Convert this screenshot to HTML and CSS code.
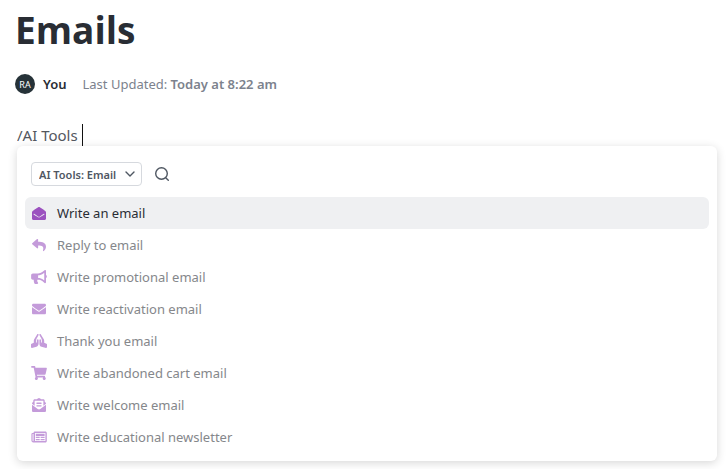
FILE: index.html
```html
<!DOCTYPE html>
<html lang="en">
  <head>
    <meta charset="UTF-8">
    <title>Emails</title>
    <link rel="stylesheet" href="styles.css">
  </head>
  <body>
    <main class="doc">
      <header class="doc-head">
        <h1 class="doc-title">Emails</h1>
        <div class="doc-meta">
          <span class="avatar">RA</span>
          <strong class="author">You</strong>
          <span class="updated">Last Updated: <strong>Today at 8:22 am</strong></span>
        </div>
      </header>

      <div class="editor">
        <input class="editor-input" type="text" value="/AI Tools" aria-label="Document text">
        <span class="caret"></span>
      </div>

      <div class="menu">
        <div class="menu-bar">
          <div class="picker">
            <select class="picker-select" aria-label="AI tools category">
              <option>AI Tools: Email</option>
            </select>
            <svg class="picker-arrow" viewBox="0 0 12 12"><path d="M2 4l4 4 4-4"/></svg>
          </div>
          <button class="search" type="button" aria-label="Search">
            <svg viewBox="0 0 16 16"><circle cx="7.5" cy="7.5" r="5.8"/><path d="M11.7 11.7l2.6 2.6"/></svg>
          </button>
        </div>

        <ul class="menu-list">
          <li>
            <button class="item active" type="button">
              <svg viewBox="0 0 512 512" preserveAspectRatio="none"><path d="M512 464c0 26.51-21.49 48-48 48H48c-26.51 0-48-21.49-48-48V200.724a48 48 0 0 1 18.387-37.776c24.913-19.529 45.501-35.365 164.2-121.511C199.412 29.17 232.797-.347 256 .003c23.198-.354 56.596 29.172 73.413 41.433 118.687 86.137 139.303 101.995 164.2 121.512A48 48 0 0 1 512 200.724V464zm-65.666-196.605c-2.563-3.728-7.7-4.595-11.339-1.907-22.845 16.873-55.462 40.705-105.582 77.079-16.825 12.266-50.21 41.781-73.413 41.43-23.211.344-56.559-29.143-73.413-41.43-50.114-36.37-82.734-60.204-105.582-77.079-3.639-2.688-8.776-1.821-11.339 1.907l-9.072 13.196a7.998 7.998 0 0 0 1.839 10.967c22.887 16.899 55.454 40.69 105.303 76.868 20.274 14.781 56.524 47.813 92.264 47.573 35.724.242 71.961-32.771 92.263-47.573 49.85-36.179 82.418-59.97 105.303-76.868a7.998 7.998 0 0 0 1.839-10.967l-9.071-13.196z"/></svg>
              Write an email
            </button>
          </li>
          <li>
            <button class="item" type="button">
              <svg viewBox="0 0 512 512"><path d="M8.309 189.836L184.313 37.851C199.719 24.546 224 35.347 224 56.015v80.053c160.629 1.839 288 34.032 288 186.258 0 61.441-39.581 122.309-83.333 154.132-13.653 9.931-33.111-2.533-28.077-18.631 45.344-145.012-21.507-183.51-176.59-185.742V360c0 20.7-24.3 31.453-39.687 18.164l-176.004-152c-11.071-9.562-11.086-26.753 0-36.328z"/></svg>
              Reply to email
            </button>
          </li>
          <li>
            <button class="item" type="button">
              <svg viewBox="0 0 576 512"><path d="M576 240c0-23.63-12.95-44.04-32-55.12V32.01C544 23.26 537.02 0 512 0c-7.12 0-14.19 2.38-19.98 7.02l-85.03 68.03C364.28 109.19 310.66 128 256 128H64c-35.35 0-64 28.65-64 64v96c0 35.35 28.65 64 64 64h33.7c-1.39 10.48-2.18 21.14-2.18 32 0 39.77 9.26 77.35 25.56 110.94 5.19 10.69 16.52 17.06 28.4 17.06h74.28c26.05 0 41.69-29.84 25.9-50.56-16.4-21.52-26.15-48.36-26.15-77.44 0-11.11 1.62-21.79 4.41-32H256c54.66 0 108.28 18.81 150.98 52.95l85.03 68.03a32.023 32.023 0 0 0 19.98 7.02c24.92 0 32-22.78 32-32V295.13C563.05 284.04 576 263.63 576 240zm-96 141.42l-33.05-26.44C392.95 311.78 325.12 288 256 288v-96c69.12 0 136.95-23.78 190.95-66.98L480 98.58v282.84z"/></svg>
              Write promotional email
            </button>
          </li>
          <li>
            <button class="item" type="button">
              <svg viewBox="0 0 512 512"><path d="M502.3 190.8c3.9-3.1 9.7-.2 9.7 4.7V400c0 26.5-21.5 48-48 48H48c-26.5 0-48-21.5-48-48V195.6c0-5 5.7-7.8 9.7-4.7 22.4 17.4 52.1 39.5 154.1 113.6 21.1 15.4 56.7 47.8 92.2 47.6 35.7.3 72-32.8 92.3-47.6 102-74.1 131.6-96.3 154-113.7zM256 320c23.2.4 56.6-29.2 73.4-41.4 132.7-96.3 142.8-104.7 173.4-128.7 5.8-4.5 9.2-11.5 9.2-18.9v-19c0-26.5-21.5-48-48-48H48c-26.5 0-48 21.5-48 48v19c0 7.4 3.4 14.3 9.2 18.9 30.6 23.9 40.7 32.4 173.4 128.7 16.8 12.2 50.2 41.8 73.4 41.4z"/></svg>
              Write reactivation email
            </button>
          </li>
          <li>
            <button class="item" type="button">
              <svg viewBox="0 0 640 512" preserveAspectRatio="none"><path d="M272 191.91c-17.6 0-32 14.4-32 32v80c0 8.84-7.16 16-16 16s-16-7.16-16-16v-76.55c0-17.39 4.72-34.47 13.69-49.39l77.75-129.59c9.09-15.16 4.19-34.81-10.97-43.91-14.45-8.67-32.72-4.3-42.3 9.21-.2.23-.62.21-.79.48l-117.26 175.9C117.56 205.9 112 224.31 112 243.29v80.23l-90.12 30.04A31.974 31.974 0 0 0 0 383.91v96c0 10.82 8.52 32 32 32 2.69 0 5.41-.34 8.06-1.03l179.19-46.62C269.16 449.99 304 403.8 304 351.91v-128c0-17.6-14.4-32-32-32zm346.12 161.73L528 323.6v-80.23c0-18.98-5.56-37.39-16.12-53.23L394.62 14.25c-.18-.27-.59-.24-.79-.48-9.58-13.51-27.85-17.88-42.3-9.21-15.16 9.09-20.06 28.75-10.97 43.91l77.75 129.59c8.97 14.92 13.69 32 13.69 49.39V304c0 8.84-7.16 16-16 16s-16-7.16-16-16v-80c0-17.6-14.4-32-32-32s-32 14.4-32 32v128c0 51.89 34.84 98.08 84.75 112.34l179.19 46.62c2.66.69 5.38 1.03 8.06 1.03 23.48 0 32-21.18 32-32v-96c0-13.77-8.81-25.99-21.88-30.35z"/></svg>
              Thank you email
            </button>
          </li>
          <li>
            <button class="item" type="button">
              <svg viewBox="0 0 576 512"><path d="M528.12 301.319l47.273-208C578.806 78.301 567.391 64 551.99 64H159.208l-9.166-44.81C147.758 8.021 137.93 0 126.529 0H24C10.745 0 0 10.745 0 24v16c0 13.255 10.745 24 24 24h69.883l70.248 343.435C147.325 417.1 136 435.222 136 456c0 30.928 25.072 56 56 56s56-25.072 56-56c0-15.674-6.447-29.835-16.824-40h209.647C430.447 426.165 424 440.326 424 456c0 30.928 25.072 56 56 56s56-25.072 56-56c0-22.172-12.888-41.332-31.579-50.405l5.517-24.276c3.413-15.018-8.002-29.319-23.403-29.319H218.117l-6.545-32h293.145c11.206 0 20.92-7.754 23.403-18.681z"/></svg>
              Write abandoned cart email
            </button>
          </li>
          <li>
            <button class="item" type="button">
              <svg viewBox="0 0 512 512"><path d="M176 216h160c8.84 0 16-7.16 16-16v-16c0-8.84-7.16-16-16-16H176c-8.84 0-16 7.16-16 16v16c0 8.84 7.16 16 16 16zm-16 80c0 8.84 7.16 16 16 16h160c8.84 0 16-7.16 16-16v-16c0-8.84-7.16-16-16-16H176c-8.84 0-16 7.16-16 16v16zm96 121.13c-16.42 0-32.84-5.06-46.86-15.19L0 250.86V464c0 26.51 21.49 48 48 48h416c26.51 0 48-21.49 48-48V250.86L302.86 401.94c-14.02 10.12-30.44 15.19-46.86 15.19zm237.61-254.18c-8.85-6.94-17.24-13.47-29.61-22.81V96c0-26.51-21.49-48-48-48h-77.55c-3.04-2.2-5.87-4.26-9.04-6.56C312.6 29.17 279.2-.35 256 0c-23.2-.35-56.59 29.17-73.41 41.44-3.17 2.3-6 4.36-9.04 6.56H96c-26.51 0-48 21.49-48 48v44.14c-12.37 9.33-20.76 15.87-29.61 22.81A47.995 47.995 0 0 0 0 200.72v10.65l96 69.35V96h320v184.72l96-69.35v-10.65c0-14.74-6.78-28.67-18.39-37.77z"/></svg>
              Write welcome email
            </button>
          </li>
          <li>
            <button class="item" type="button">
              <svg viewBox="0 0 16 14"><path fill-rule="evenodd" d="M4 1.6h10.3c.9 0 1.5.6 1.5 1.5v7.8c0 .9-.6 1.5-1.5 1.5H2.2C1.200 12.400.4 11.600.4 10.600V4.200c0-.8.5-1.300 1.300-1.300h.8C2.500 2.100 3.200 1.600 4 1.600zM2.500 4H1.600v6.600c0 .9.9.9.9 0zM4 3v8h10.400V3z"/><path d="M4.800 3.700h8.800v2.200H4.800zM4.800 6.700h3.900v1.400H4.800zM9.600 6.700h4v1.400h-4zM4.800 8.900h3.900v1.400H4.800zM9.600 8.900h4v1.400h-4z"/></svg>
              Write educational newsletter
            </button>
          </li>
        </ul>
      </div>
    </main>
  </body>
</html>
```
FILE: styles.css
```css
* { box-sizing:border-box; }

body {
  margin:0;
  background:#fff;
  color:#292d34;
  font-family:'Noto Sans', 'Open Sans', sans-serif;
  font-size:13px;
}

button, input, select {
  font:inherit;
  color:inherit;
  border:none;
  background:none;
  margin:0;
  padding:0;
}

.doc { padding:4px 11px 8px 17px; }

.doc-head { margin-left:-2px; }
.doc-title {
  margin:0;
  font-family:'Open Sans', sans-serif;
  font-size:37px;
  line-height:52px;
  font-weight:700;
}

.doc-meta {
  display:flex;
  align-items:center;
  height:20px;
  margin-top:18px;
}
.avatar {
  display:flex;
  align-items:center;
  justify-content:center;
  width:20px;
  height:20px;
  margin-right:8px;
  border-radius:50%;
  background:#263238;
  color:#fff;
  font-size:9px;
}
.author {
  margin-right:16px;
  font-weight:600;
}
.updated { color:#7c828d; }
.updated strong { font-weight:600; }

.editor {
  display:flex;
  align-items:center;
  gap:4px;
  height:22px;
  margin-top:30px;
}
.editor-input {
  field-sizing:content;
  color:#53575e;
  font-size:15px;
  line-height:22px;
  outline:none;
}
.caret {
  width:1px;
  height:22px;
  background:#111;
}

.menu {
  padding:16px 8px 8px;
  border-radius:6px;
  background:#fff;
  box-shadow:0 2px 10px rgba(0,0,0,0.16);
}

.menu-bar {
  display:flex;
  align-items:center;
  gap:12px;
  padding-left:6px;
  margin-bottom:11px;
}
.picker {
  display:grid;
  align-items:center;
  color:#4f5762;
}
.picker-select {
  grid-area:1 / 1;
  appearance:none;
  height:24px;
  padding:0 24px 0 7px;
  border:1px solid #d6d9de;
  border-radius:4px;
  font-size:11px;
  font-weight:600;
}
.picker-arrow {
  grid-area:1 / 1;
  justify-self:end;
  width:12px;
  height:12px;
  margin-right:6px;
  pointer-events:none;
}
.search {
  display:flex;
  color:#4f5762;
}
.search svg { width:16px; height:16px; }
.search svg, .picker-arrow {
  fill:none;
  stroke:currentColor;
  stroke-width:1.4;
  stroke-linecap:round;
  stroke-linejoin:round;
}

.menu-list {
  list-style:none;
  margin:0;
  padding:0;
}
.item {
  display:flex;
  align-items:center;
  gap:10px;
  width:100%;
  height:32px;
  padding:0 6px;
  border-radius:6px;
  color:#85878b;
  text-align:left;
  cursor:pointer;
}
.item svg {
  width:16px;
  height:14px;
  fill:#c49bda;
}
.item.active {
  background:#eff0f2;
  color:#292d34;
}
.item.active svg {
  width:14px;
  height:13px;
  margin:0 1px;
  fill:#9b51bf;
}
```
